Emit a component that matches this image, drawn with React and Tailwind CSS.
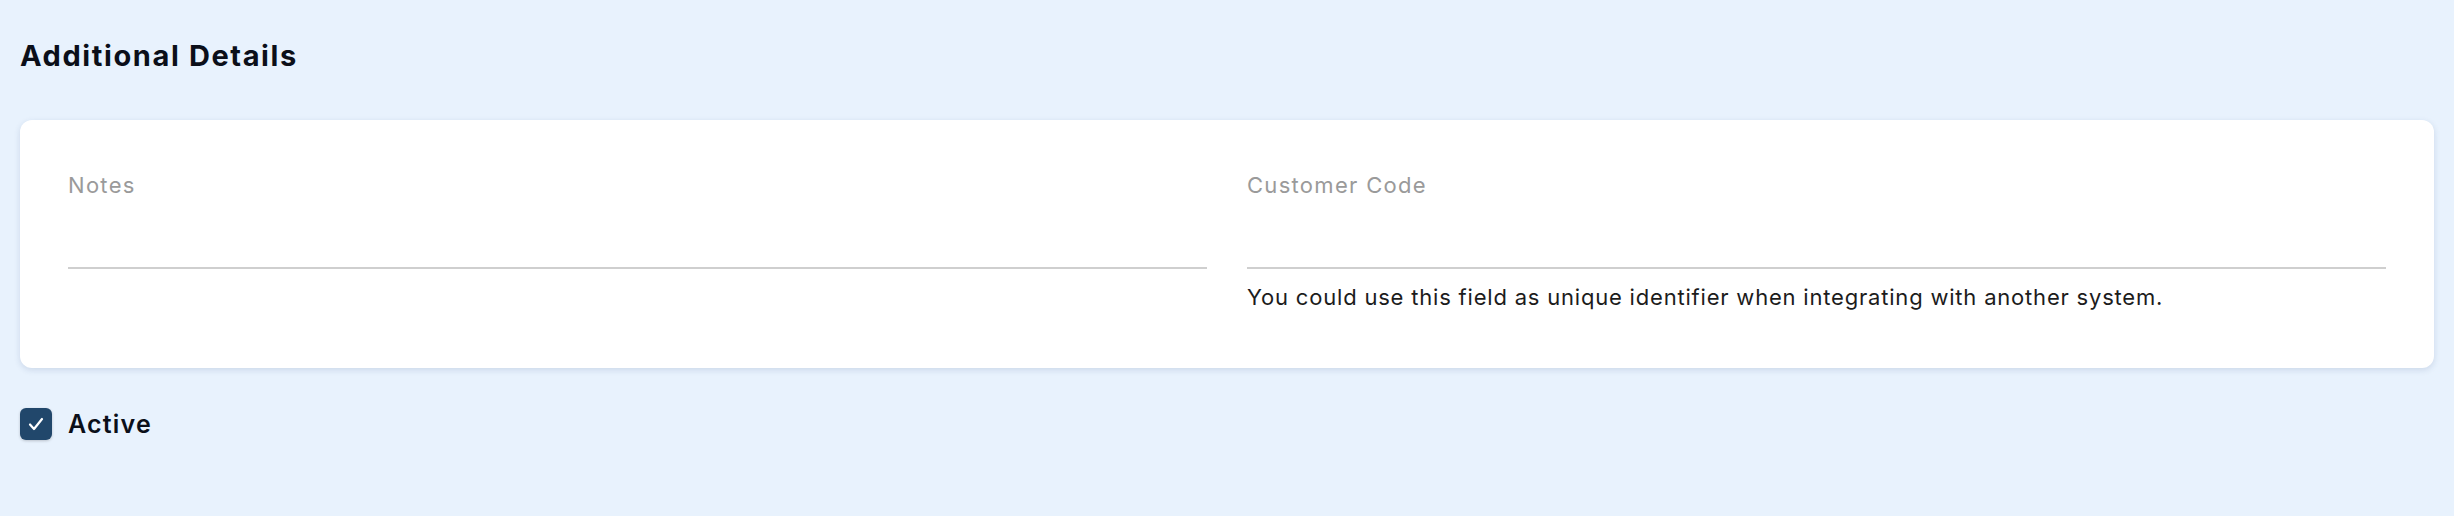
export default function App() {
  return (
    <div className="min-h-[516px] bg-[#e8f2fd] px-5 pt-[39px] pb-10 font-['Inter',sans-serif]">
      <h2 className="text-[29px] leading-[34px] font-bold tracking-[1.6px] text-[#0b0f19]">Additional Details</h2>
      <div className="mt-[47px] rounded-xl bg-white px-12 pt-[51px] pb-[57px] shadow-[0_2px_6px_rgba(30,60,110,0.14)]">
        <div className="grid grid-cols-2 gap-10">
          <div>
            <div className="text-[22px] leading-[28px] tracking-[1.3px] text-[#9a9a9a]">Notes</div>
            <div className="h-[70px] border-b-2 border-[#cfcfcf]"></div>
          </div>
          <div>
            <div className="text-[22px] leading-[28px] tracking-[1.3px] text-[#9a9a9a]">Customer Code</div>
            <div className="h-[70px] border-b-2 border-[#cfcfcf]"></div>
            <p className="mt-[14px] text-[22px] leading-[28px] tracking-[0.8px] text-[#1c1c1c]">
              You could use this field as unique identifier when integrating with another system.
            </p>
          </div>
        </div>
      </div>
      <label className="mt-10 flex items-center gap-4">
        <span className="flex h-8 w-8 items-center justify-center rounded-md bg-[#21476b] shadow-[0_1px_3px_rgba(0,0,0,0.2)]">
          <svg viewBox="0 0 24 24" className="h-6 w-6" fill="none" stroke="white" strokeWidth="2.2" strokeLinecap="round" strokeLinejoin="round">
            <path d="M6 12.5l4 4.5 8-10" />
          </svg>
        </span>
        <span className="text-[25px] leading-[32px] font-semibold tracking-[1.2px] text-[#0b0f19]">Active</span>
      </label>
    </div>
  );
}
